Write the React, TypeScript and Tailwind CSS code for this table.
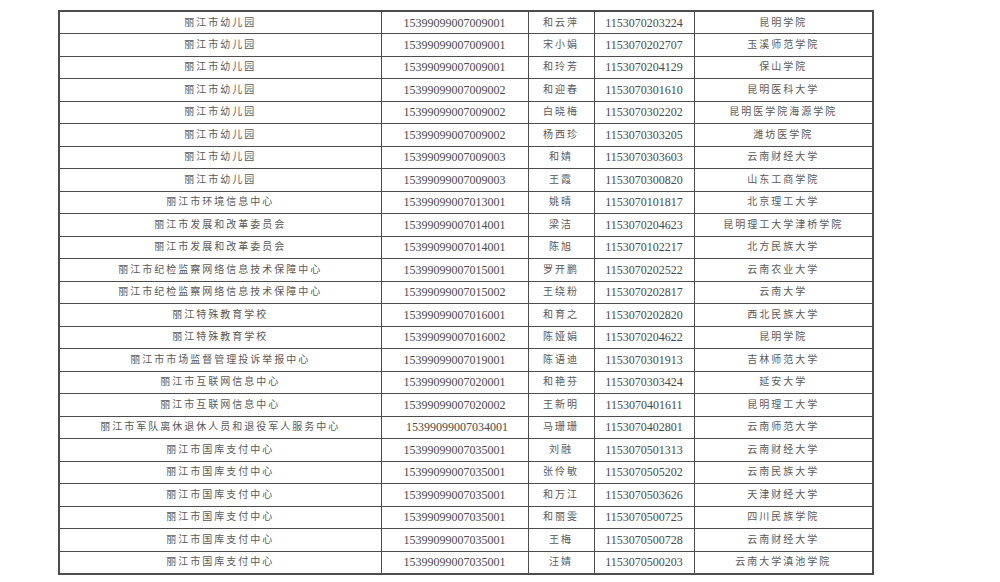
const rows: [string, string, string, string, string][] = [
  ["丽江市幼儿园", "15399099007009001", "和云萍", "1153070203224", "昆明学院"],
  ["丽江市幼儿园", "15399099007009001", "宋小娟", "1153070202707", "玉溪师范学院"],
  ["丽江市幼儿园", "15399099007009001", "和玲芳", "1153070204129", "保山学院"],
  ["丽江市幼儿园", "15399099007009002", "和迎春", "1153070301610", "昆明医科大学"],
  ["丽江市幼儿园", "15399099007009002", "白晓梅", "1153070302202", "昆明医学院海源学院"],
  ["丽江市幼儿园", "15399099007009002", "杨西珍", "1153070303205", "潍坊医学院"],
  ["丽江市幼儿园", "15399099007009003", "和婧", "1153070303603", "云南财经大学"],
  ["丽江市幼儿园", "15399099007009003", "王霞", "1153070300820", "山东工商学院"],
  ["丽江市环境信息中心", "15399099007013001", "姚晴", "1153070101817", "北京理工大学"],
  ["丽江市发展和改革委员会", "15399099007014001", "梁洁", "1153070204623", "昆明理工大学津桥学院"],
  ["丽江市发展和改革委员会", "15399099007014001", "陈旭", "1153070102217", "北方民族大学"],
  ["丽江市纪检监察网络信息技术保障中心", "15399099007015001", "罗开鹏", "1153070202522", "云南农业大学"],
  ["丽江市纪检监察网络信息技术保障中心", "15399099007015002", "王绕粉", "1153070202817", "云南大学"],
  ["丽江特殊教育学校", "15399099007016001", "和育之", "1153070202820", "西北民族大学"],
  ["丽江特殊教育学校", "15399099007016002", "陈娅娟", "1153070204622", "昆明学院"],
  ["丽江市市场监督管理投诉举报中心", "15399099007019001", "陈语迪", "1153070301913", "吉林师范大学"],
  ["丽江市互联网信息中心", "15399099007020001", "和艳芬", "1153070303424", "延安大学"],
  ["丽江市互联网信息中心", "15399099007020002", "王新明", "1153070401611", "昆明理工大学"],
  ["丽江市军队离休退休人员和退役军人服务中心", "15399099007034001", "马珊珊", "1153070402801", "云南师范大学"],
  ["丽江市国库支付中心", "15399099007035001", "刘融", "1153070501313", "云南财经大学"],
  ["丽江市国库支付中心", "15399099007035001", "张伶敏", "1153070505202", "云南民族大学"],
  ["丽江市国库支付中心", "15399099007035001", "和万江", "1153070503626", "天津财经大学"],
  ["丽江市国库支付中心", "15399099007035001", "和丽雯", "1153070500725", "四川民族学院"],
  ["丽江市国库支付中心", "15399099007035001", "王梅", "1153070500728", "云南财经大学"],
  ["丽江市国库支付中心", "15399099007035001", "汪婧", "1153070500203", "云南大学滇池学院"],
];

const cjk =
  "font-['Liberation_Serif','Noto_Sans_CJK_SC',serif] text-[10px] tracking-[2px] text-[#5a5a5a]";
const num = "font-['Liberation_Serif',serif] text-[12px] text-[#4a4a4a]";
const cell = "border border-[#4d4d4d] text-center align-middle p-0 leading-none";

export default function App() {
  return (
    <div className="w-[1000px] h-[582px] bg-white pt-[10px] pl-[58px] overflow-hidden">
      <table className="table-fixed border-collapse w-[814px] border-2 border-[#4d4d4d]">
        <colgroup>
          <col className="w-[322px]" />
          <col className="w-[147px]" />
          <col className="w-[66px]" />
          <col className="w-[100px]" />
          <col className="w-[179px]" />
        </colgroup>
        <tbody>
          {rows.map((r, i) => (
            <tr key={i} className="h-[22.5px]">
              <td className={`${cell} ${cjk}`}>{r[0]}</td>
              <td className={`${cell} ${num} ${i === 18 ? "pl-[5px]" : ""}`}>{r[1]}</td>
              <td className={`${cell} ${cjk}`}>{r[2]}</td>
              <td className={`${cell} ${num}`}>{r[3]}</td>
              <td className={`${cell} ${cjk}`}>{r[4]}</td>
            </tr>
          ))}
        </tbody>
      </table>
    </div>
  );
}
